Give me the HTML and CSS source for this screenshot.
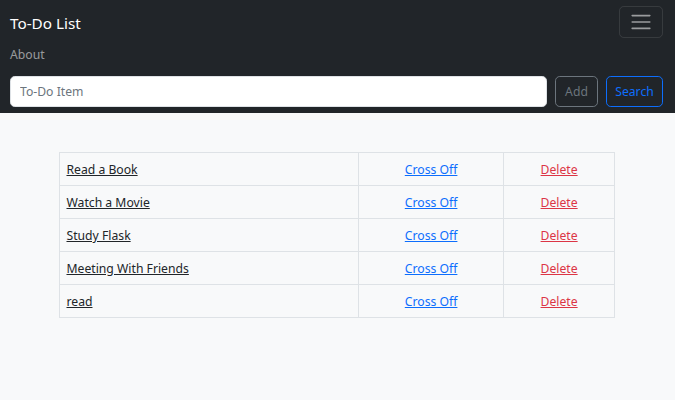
FILE: index.html
```html
<!DOCTYPE html>
<html lang="en">
<head>
<meta charset="utf-8">
<title>To-Do List</title>
<link rel="stylesheet" href="styles.css">
</head>
<body>
<nav class="navbar">
  <div class="nav-top">
    <a class="brand" href="#">To-Do List</a>
    <button class="toggler" type="button" aria-label="Toggle navigation">
      <svg width="24" height="24" viewBox="0 0 30 30"><path d="M4 7h22M4 15h22M4 23h22" stroke="rgba(255,255,255,0.55)" stroke-width="2" stroke-linecap="round" stroke-miterlimit="10"/></svg>
    </button>
  </div>
  <ul class="nav-list">
    <li><a class="nav-link" href="#">About</a></li>
  </ul>
  <form class="search-form">
    <input class="form-input" type="text" placeholder="To-Do Item">
    <button class="btn btn-grey" type="button">Add</button>
    <button class="btn btn-blue" type="button">Search</button>
  </form>
</nav>
<main class="container">
  <table class="todo-table">
    <colgroup>
      <col class="c-item"><col class="c-cross"><col class="c-del">
    </colgroup>
    <tbody>
      <tr><td><a class="item" href="#">Read a Book</a></td><td class="center"><a class="cross" href="#">Cross Off</a></td><td class="center"><a class="del" href="#">Delete</a></td></tr>
      <tr><td><a class="item" href="#">Watch a Movie</a></td><td class="center"><a class="cross" href="#">Cross Off</a></td><td class="center"><a class="del" href="#">Delete</a></td></tr>
      <tr><td><a class="item" href="#">Study Flask</a></td><td class="center"><a class="cross" href="#">Cross Off</a></td><td class="center"><a class="del" href="#">Delete</a></td></tr>
      <tr><td><a class="item" href="#">Meeting With Friends</a></td><td class="center"><a class="cross" href="#">Cross Off</a></td><td class="center"><a class="del" href="#">Delete</a></td></tr>
      <tr><td><a class="item" href="#">read</a></td><td class="center"><a class="cross" href="#">Cross Off</a></td><td class="center"><a class="del" href="#">Delete</a></td></tr>
    </tbody>
  </table>
</main>
</body>
</html>
```
FILE: styles.css
```css
* { box-sizing: border-box; }
html, body { margin: 0; padding: 0; }
body {
  background: #f8f9fa;
  color: #212529;
  font-family: "Noto Sans", "Open Sans", sans-serif;
  font-size: 12.2px;
  line-height: 1.5;
  min-height: 400px;
}
.navbar {
  background: #212529;
  padding: 6px 12px 6px 10px;
}
.nav-top {
  display: flex;
  justify-content: space-between;
  align-items: center;
  height: 32px;
}
.brand {
  color: #fff;
  text-decoration: none;
  font-size: 15.3px;
  line-height: 24px;
  padding-top: 1px;
}
.toggler {
  width: 44px;
  height: 32px;
  background: transparent;
  border: 1px solid rgba(255,255,255,0.1);
  border-radius: 4.8px;
  padding: 0;
  display: flex;
  align-items: center;
  justify-content: center;
}
.toggler svg { display: block; }
.nav-list {
  list-style: none;
  margin: 0 0 6px;
  padding: 0;
}
.nav-link {
  display: block;
  padding: 7.4px 0 5.4px;
  color: rgba(255,255,255,0.55);
  text-decoration: none;
  line-height: 19.2px;
}
.search-form {
  display: flex;
  gap: 8px;
  height: 31px;
}
.form-input {
  flex: 1;
  min-width: 0;
  height: 31px;
  border: 1px solid #dee2e6;
  border-radius: 4.8px;
  background: #fff;
  padding: 1px 9px 0;
  font: inherit;
  color: #212529;
}
.form-input::placeholder { color: #6c757d; }
.btn {
  height: 31px;
  padding: 1px 0 0;
  font: inherit;
  background: transparent;
  border-radius: 4.8px;
  border: 1px solid;
  text-align: center;
}
.btn-grey { color: #6c757d; border-color: #6c757d; width: 43px; }
.btn-blue { color: #0d6efd; border-color: #0d6efd; width: 57px; }
.container {
  width: 576px;
  margin: 0 auto;
  padding: 39px 9.6px 0;
}
.todo-table {
  width: 555px;
  border-collapse: collapse;
  table-layout: fixed;
}
.c-item { width: 299px; }
.c-cross { width: 145px; }
.c-del { width: 111px; }
.todo-table td {
  border: 1px solid #dee2e6;
  padding: 7.4px 6.4px 5.4px;
  height: 33px;
  line-height: 19.2px;
}
.todo-table td.center { text-align: center; }
.item { color: #212529; }
.cross { color: #0d6efd; }
.del { color: #dc3545; }
```
